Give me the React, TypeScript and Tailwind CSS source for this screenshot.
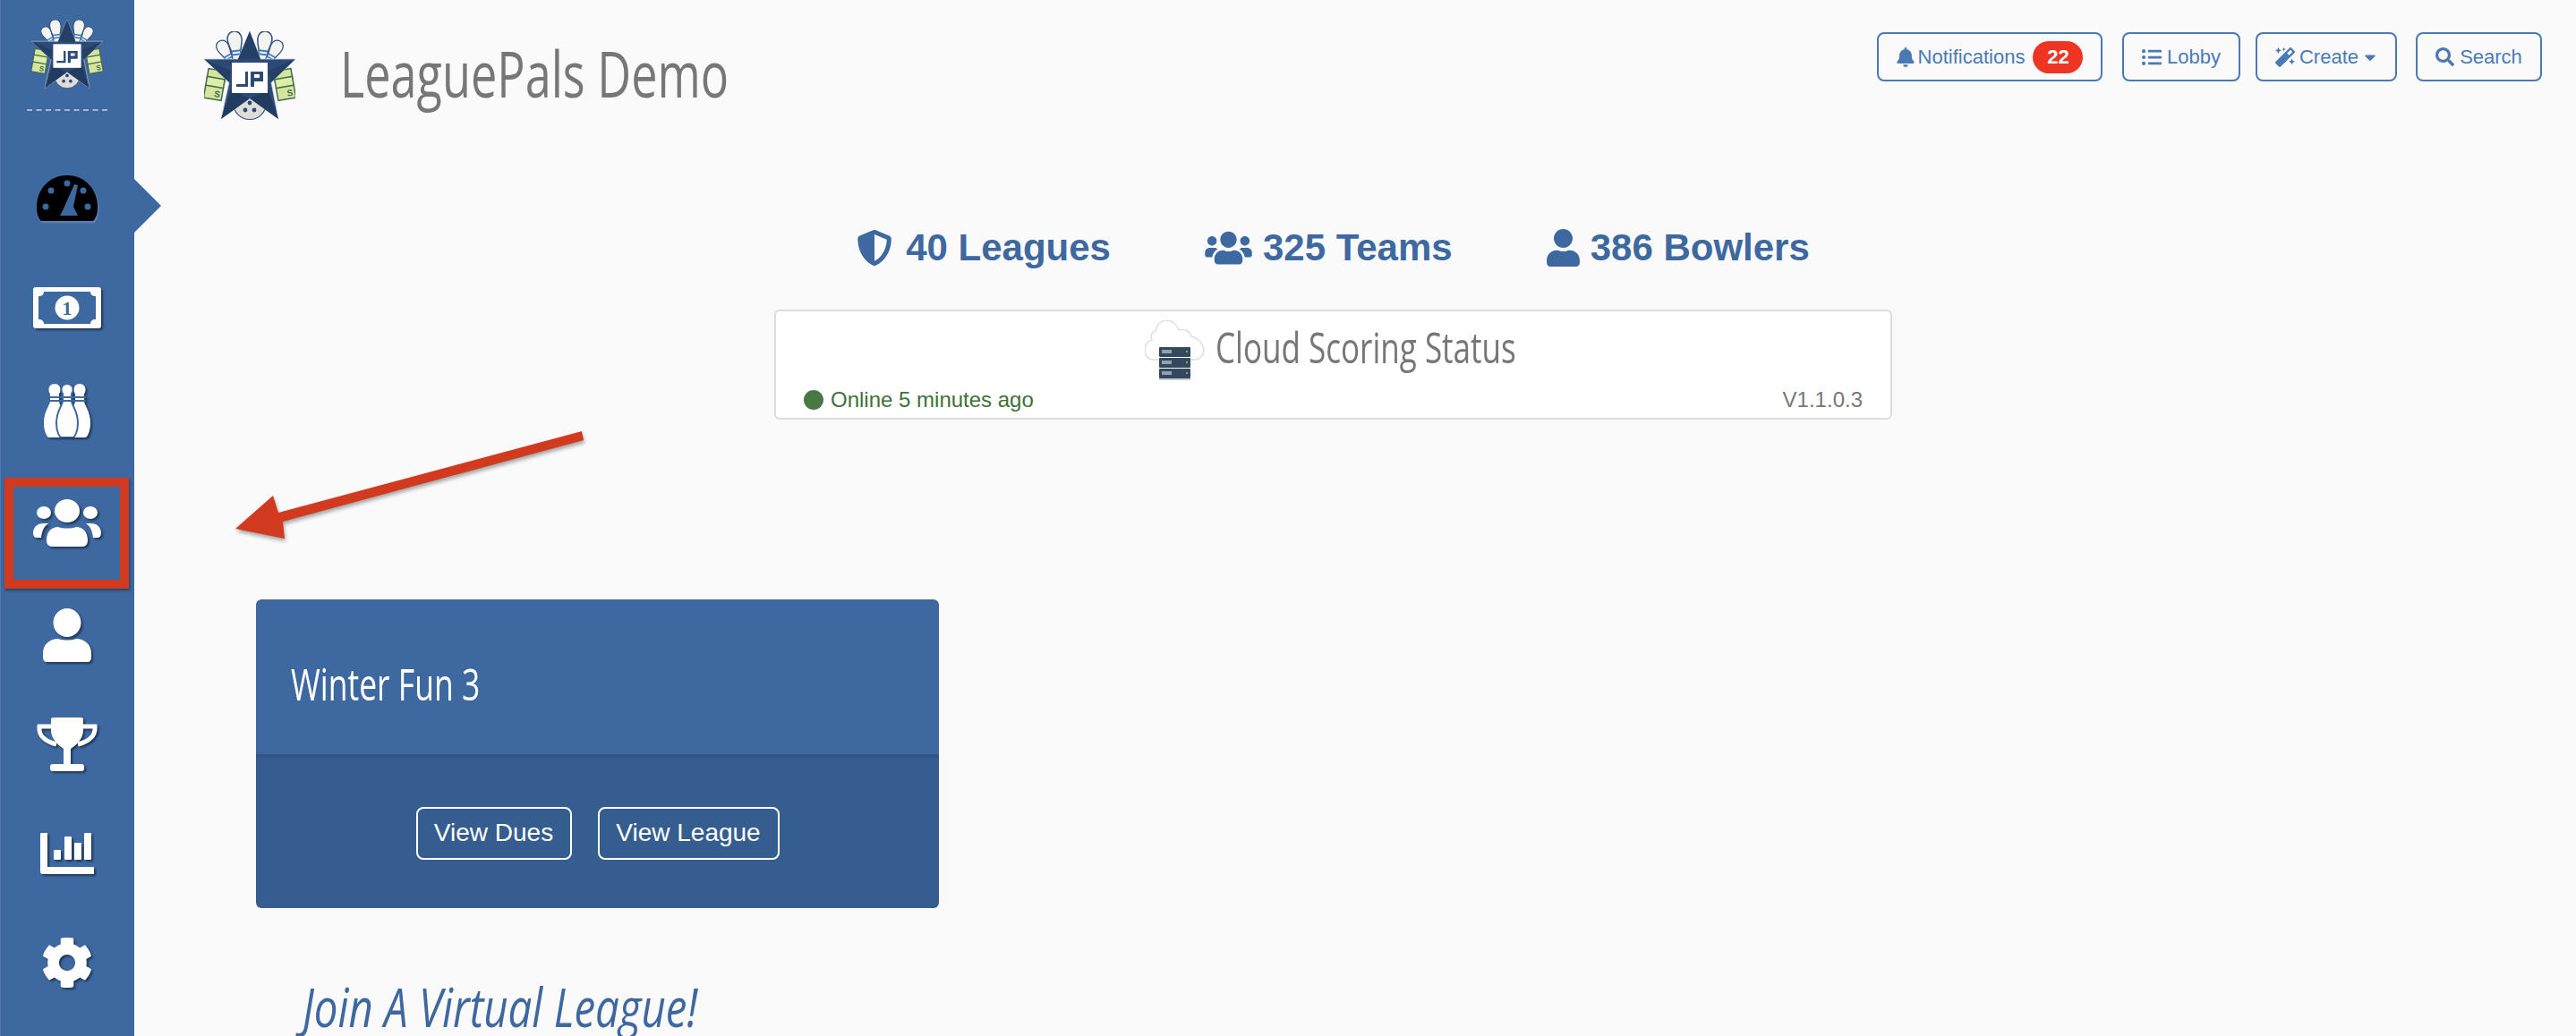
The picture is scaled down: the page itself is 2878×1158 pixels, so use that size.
import React from 'react';
import { FaBell, FaCaretDown, FaCog, FaListUl, FaMagic, FaSearch, FaShieldAlt, FaUser, FaUsers } from 'react-icons/fa';

const navShadow = 'drop-shadow-[2px_2px_1px_rgba(0,0,0,0.45)]';
const narrow = "font-['Open_Sans',sans-serif] font-medium inline-block whitespace-nowrap origin-left leading-none";

// Star + bowling pins logo, drawn on a 102x100 box
const Logo = ({ className }: { className: string }) => {
  const Pin = ({ x, y, rot, s }: { x: number; y: number; rot: number; s: number }) => (
    <g transform={`translate(${x} ${y}) rotate(${rot}) scale(${s})`}>
      <path d="M0 0 C5 0 8 4 8 9 C8 15 5 20 5 24 L5 36 H-5 L-5 24 C-5 20 -8 15 -8 9 C-8 4 -5 0 0 0 Z" fill="#f3f3f1" stroke="#33527c" strokeWidth="1.5" />
      <rect x="-5" y="21" width="10" height="2" fill="#3f7cc4" />
      <rect x="-5" y="25" width="10" height="2" fill="#3f7cc4" />
    </g>
  );
  const Cash = ({ x, rot }: { x: number; rot: number }) => (
    <g transform={`translate(${x} 60) rotate(${rot})`}>
      <rect x="-10" y="-17" width="20" height="11" fill="#d3e69c" stroke="#44684f" strokeWidth="1.5" />
      <rect x="-10" y="-8" width="20" height="11" fill="#dcefa6" stroke="#44684f" strokeWidth="1.5" />
      <rect x="-10" y="2" width="20" height="14" fill="#d3e69c" stroke="#44684f" strokeWidth="1.5" />
      <text x="1" y="13" fontSize="10" fontWeight="700" fill="#44684f" fontFamily="Liberation Sans, sans-serif">S</text>
    </g>
  );
  return (
    <svg viewBox="0 0 102 100" className={className}>
      <Pin x={17} y={11} rot={-30} s={0.85} />
      <Pin x={33} y={0} rot={-7} s={1} />
      <Pin x={69} y={0} rot={7} s={1} />
      <Pin x={85} y={11} rot={30} s={0.85} />
      <Cash x={12} rot={10} />
      <Cash x={90} rot={-10} />
      <circle cx="51" cy="80" r="18.5" fill="#e0dcd8" stroke="#33527c" strokeWidth="1.2" />
      <path d="M51 0 L63 31 L102 31 L75 57 L83 98 L51 75 L19 98 L28 57 L0 31 L38 31 Z" fill="#2c4a77" stroke="#c8d0dc" strokeWidth="0.8" />
      <path d="M51 0 L63 31 L38 31 Z M0 31 L30 44 L28 57 Z M102 31 L72 44 L75 57 Z" fill="#254067" />
      <path d="M51 75 L19 98 L30 66 Z M51 75 L83 98 L72 66 Z" fill="#223c61" />
      <circle cx="51" cy="80" r="2.4" fill="#2c4a77" />
      <circle cx="46" cy="88" r="2.4" fill="#2c4a77" />
      <circle cx="56" cy="88" r="2.4" fill="#2c4a77" />
      <rect x="31" y="35" width="40" height="34" fill="#ffffff" />
      <path d="M36 59 H46 V45 H49 V62 H36 Z M52 45 H66 V56 H56 V62 H52 Z M56 48 V52 H62 V48 Z" fill="#2c4a77" fillRule="evenodd" />
    </svg>
  );
};

const Gauge = () => (
  <svg viewBox="0 0 70 54" className="w-[70px] h-[54px] drop-shadow-[1px_2px_1px_rgba(255,255,255,0.2)]">
    <path d="M35 1 C15 1 1 17 1 36 C1 43 2 48 6 52 H64 C68 48 69 43 69 36 C69 17 55 1 35 1 Z" fill="#000000" />
    <g fill="#3d68a0">
      <circle cx="35" cy="10" r="3.5" />
      <circle cx="17" cy="18" r="3.5" />
      <circle cx="53" cy="18" r="3.5" />
      <circle cx="11" cy="36" r="3.5" />
      <circle cx="58" cy="36" r="3.5" />
      <path d="M43 11 L47 12 L42 36 L47 46 H27 L32 36 Z" />
    </g>
  </svg>
);

const Money = () => (
  <svg viewBox="0 0 76 46" className={`w-[76px] h-[46px] ${navShadow}`}>
    <rect x="0" y="0" width="76" height="46" rx="3" fill="#ffffff" />
    <path d="M12 5 H64 C64 8 66 10 70 10 V36 C66 36 64 38 64 41 H12 C12 38 10 36 6 36 V10 C10 10 12 8 12 5 Z" fill="#3d68a0" />
    <circle cx="38" cy="23" r="13.5" fill="#ffffff" />
    <text x="38" y="31" textAnchor="middle" fontSize="22" fontWeight="700" fill="#3d68a0" fontFamily="Liberation Serif, serif">1</text>
  </svg>
);

const Pins = () => {
  const pin = 'M0 0 C-4 0 -6.5 3 -6.5 6 C-6.5 9 -6 10 -5 11 V19 C-5 24 -12 30 -12 44 C-12 52 -9 60 -6 60 H6 C9 60 12 52 12 44 C12 30 5 24 5 19 V11 C6 10 6.5 9 6.5 6 C6.5 3 4 0 0 0 Z';
  return (
    <svg viewBox="0 0 52 60" className={`w-[52px] h-[60px] ${navShadow}`}>
      <path d={pin} transform="translate(12 0)" fill="#ffffff" />
      <path d={pin} transform="translate(40 0)" fill="#ffffff" />
      <path d={pin} transform="translate(26 0)" fill="#ffffff" stroke="#3d68a0" strokeWidth="2" />
      <g fill="#3d68a0">
        <rect x="5" y="14" width="42" height="2" />
        <rect x="5" y="18" width="42" height="2" />
      </g>
    </svg>
  );
};

const Team = () => (
  <svg viewBox="0 0 76 54" className={`w-[76px] h-[54px] ${navShadow}`}>
    <g fill="#ffffff">
      <ellipse cx="38" cy="13" rx="14" ry="13" />
      <ellipse cx="12" cy="15" rx="8" ry="7" />
      <ellipse cx="64" cy="15" rx="8" ry="7" />
      <path d="M0 38 C0 30 6 27 12 27 H17 C13 30 10 34 9 43 H4 C2 43 0 41 0 38 Z" />
      <path d="M76 38 C76 30 70 27 64 27 H59 C63 30 66 34 67 43 H72 C74 43 76 41 76 38 Z" />
      <path d="M15 46 C15 36 21 31 28 31 C33 33 43 33 48 31 C55 31 61 36 61 46 C61 50 59 53 55 53 H21 C17 53 15 50 15 46 Z" />
    </g>
  </svg>
);

const Person = () => (
  <svg viewBox="0 0 54 60" className={`w-[54px] h-[60px] ${navShadow}`}>
    <g fill="#ffffff">
      <ellipse cx="27" cy="16" rx="15.5" ry="16" />
      <path d="M0 50 C0 40 8 34 17 34 C23 36 31 36 37 34 C46 34 54 40 54 50 V55 C54 58 52 60 50 60 H4 C2 60 0 58 0 55 Z" />
    </g>
  </svg>
);

const Trophy = () => (
  <svg viewBox="0 0 68 60" className={`w-[68px] h-[60px] ${navShadow}`}>
    <g fill="#ffffff">
      <path d="M16 2 C16 1 17 0 18 0 H50 C51 0 52 1 52 2 V14 C52 24 44 31 38 35 V52 H30 V35 C24 31 16 24 16 14 Z" />
      <rect x="15" y="52" width="38" height="8" rx="3" />
    </g>
    <path d="M17 10 H3 C2 20 8 26 22 30 M51 10 H65 C66 20 60 26 46 30" fill="none" stroke="#ffffff" strokeWidth="5" />
  </svg>
);

const Chart = () => (
  <svg viewBox="0 0 60 46" className={`w-[60px] h-[46px] ${navShadow}`}>
    <g fill="#ffffff">
      <path d="M1 0 H8 V38 H60 V46 H3 C1 46 0 45 0 43 V1 Z" />
      <rect x="15" y="19" width="8" height="11" rx="1" />
      <rect x="27" y="4" width="8" height="26" rx="1" />
      <rect x="38" y="11" width="8" height="19" rx="1" />
      <rect x="49" y="0" width="8" height="30" rx="1" />
    </g>
  </svg>
);

const CloudServer = () => {
  const unit = (y: number) => (
    <g key={y}>
      <rect x="16" y={y} width="35" height="11" rx="1" fill="#34495e" />
      <rect x="19" y={y + 3} width="11" height="4" fill="#8fa1b3" />
      <circle cx="47" cy={y + 5} r="1.1" fill="#7bd848" />
    </g>
  );
  return (
    <svg viewBox="0 0 67 68" className="w-[67px] h-[68px]">
      <path d="M10 44 C2 44 0 37 0 33 C0 27 4 23 8 22 C6 17 8 12 12 12 C13 5 18 0 24 0 C31 0 36 5 38 11 C44 9 50 12 52 18 C56 19 62 22 65 29 C68 37 62 44 56 44 Z" fill="#ffffff" stroke="#dedede" strokeWidth="1.4" />
      {unit(30)}
      {unit(42)}
      {unit(54)}
      <rect x="16" y="65" width="35" height="2" fill="#c9cdd2" />
    </svg>
  );
};

const TopButton = ({ children, className }: { children: React.ReactNode; className: string }) => (
  <button className={`h-[55px] flex items-center justify-center border-2 border-[#4a7ab5] rounded-lg text-[#4a7ab5] text-[22px] bg-transparent ${className}`}>
    {children}
  </button>
);

const Stat = ({ icon, label }: { icon: React.ReactNode; label: string }) => (
  <div className="flex items-center gap-[12px] text-[#3d68a0] text-[42px] font-bold leading-none">
    {icon}
    <span>{label}</span>
  </div>
);

export default function App() {
  const navItems = [
    { icon: <Gauge />, cls: 'h-[122px]' },
    { icon: <Money />, cls: 'h-[122px]' },
    { icon: <Pins />, cls: 'h-[108px]' },
    { icon: <Team />, cls: 'h-[136px] pt-[8px]' },
    { icon: <Person />, cls: 'h-[122px]' },
    { icon: <Trophy />, cls: 'h-[122px]' },
    { icon: <Chart />, cls: 'h-[122px]' },
    { icon: <FaCog className={`w-[58px] h-[58px] text-white ${navShadow}`} />, cls: 'h-[122px]' },
  ];

  return (
    <div className="relative flex w-[2878px] h-[1158px] overflow-hidden bg-[#fafafa] font-['Liberation_Sans',Arial,sans-serif]">
      {/* Sidebar */}
      <aside className="w-[150px] shrink-0 bg-[#3d68a0] border-l border-[#5279ad] flex flex-col items-center">
        <Logo className="w-[84px] h-[78px] mt-[22px] ml-[-2px]" />
        <div className="w-[90px] mt-[22px] border-t-2 border-dashed border-[#a3b8d4] ml-[-2px]" />
        <div className="w-full mt-[37px] flex flex-col">
          {navItems.map((item, i) => (
            <div key={i} className={`w-full flex items-center justify-center pr-[1px] shrink-0 ${item.cls}`}>
              {item.icon}
            </div>
          ))}
        </div>
      </aside>

      {/* Active item notch */}
      <div className="absolute left-[150px] top-[200px] w-[30px] h-[60px] bg-[#3d68a0] [clip-path:polygon(0_0,100%_50%,0_100%)]" />

      {/* Main */}
      <main className="flex-1 min-w-0">
        <header className="flex items-start justify-between pl-[78px] pr-[38px] pt-[35px] h-[135px]">
          <div className="flex items-center gap-[50px]">
            <Logo className="w-[102px] h-[100px]" />
            <div className="w-[437px]">
              <h1 className={`${narrow} scale-x-[0.725] text-[72px] text-[#777777] mt-[-9px]`}>LeaguePals Demo</h1>
            </div>
          </div>
          <div className="flex items-center mt-[1px]">
            <TopButton className="w-[252px] gap-[4px]">
              <FaBell className="w-[20px] h-[22px]" />
              <span>Notifications</span>
              <span className="ml-[5px] w-[56px] h-[36px] rounded-full bg-[#ee3524] text-white font-bold text-[22px] flex items-center justify-center">22</span>
            </TopButton>
            <TopButton className="w-[132px] ml-[22px] gap-[6px]">
              <FaListUl className="w-[22px] h-[22px]" />
              <span>Lobby</span>
            </TopButton>
            <TopButton className="w-[158px] ml-[17px] gap-[5px]">
              <FaMagic className="w-[22px] h-[22px]" />
              <span>Create</span>
              <FaCaretDown className="w-[16px] h-[20px]" />
            </TopButton>
            <TopButton className="w-[141px] ml-[21px] gap-[6px]">
              <FaSearch className="w-[21px] h-[21px]" />
              <span>Search</span>
            </TopButton>
          </div>
        </header>

        <section className="ml-[715px] w-[1249px] mt-[121px]">
          <div className="flex items-center justify-center gap-[105px] h-[42px]">
            <Stat icon={<FaShieldAlt className="w-[40px] h-[44px] mr-[3px]" />} label="40 Leagues" />
            <Stat icon={<FaUsers className="w-[53px] h-[42px]" />} label="325 Teams" />
            <Stat icon={<FaUser className="w-[37px] h-[42px]" />} label="386 Bowlers" />
          </div>

          <div className="mt-[48px] h-[123px] bg-white border-2 border-[#dddddd] rounded-md px-[31px] flex flex-col">
            <div className="flex items-start justify-center mt-[10px] gap-[12px] h-[77px]">
              <CloudServer />
              <div className="w-[342px]">
                <span className={`${narrow} scale-x-[0.73] text-[48px] text-[#777777] mt-[6px]`}>Cloud Scoring Status</span>
              </div>
            </div>
            <div className="flex items-center justify-between text-[24px] leading-none">
              <div className="flex items-center gap-[8px] text-[#3f7038]">
                <span className="w-[22px] h-[22px] rounded-full bg-[#4a7744]" />
                <span>Online 5 minutes ago</span>
              </div>
              <span className="text-[#777777]">V1.1.0.3</span>
            </div>
          </div>
        </section>

        <section className="ml-[136px] w-[763px] mt-[201px] rounded-md overflow-hidden">
          <div className="h-[173px] bg-[#3d68a0] flex items-center pl-[39px] pt-[14px]">
            <h2 className={`${narrow} scale-x-[0.71] text-[50px] text-white`}>Winter Fun 3</h2>
          </div>
          <div className="h-[172px] bg-[#365d90] border-t-4 border-[#335683] flex items-center justify-center gap-[29px]">
            <button className="w-[174px] h-[59px] border-2 border-white rounded-lg text-white text-[28px]">View Dues</button>
            <button className="w-[203px] h-[59px] border-2 border-white rounded-lg text-white text-[28px]">View League</button>
          </div>
        </section>

        <div className="ml-[188px] mt-[80px]">
          <h2 className={`${narrow} scale-x-[0.79] italic text-[60px] text-[#3d68a0]`}>Join A Virtual League!</h2>
        </div>
      </main>

      {/* Annotation: red box and arrow */}
      <div className="absolute left-[5px] top-[534px] w-[139px] h-[124px] border-[10px] border-[#d13a1f] shadow-[1px_2px_3px_rgba(0,0,0,0.4)]" />
      <svg viewBox="0 0 2878 1158" className="absolute inset-0 w-[2878px] h-[1158px] pointer-events-none drop-shadow-[1px_3px_2px_rgba(0,0,0,0.35)]">
        <path d="M650 482 L652 492 L316 583 L318 602 L263 591 L305 554 L311 573 Z" fill="#d13a1f" />
      </svg>
    </div>
  );
}
